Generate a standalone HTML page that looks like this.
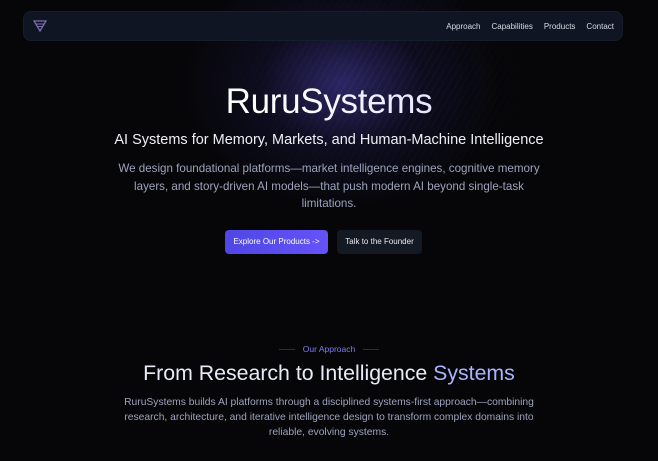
<!DOCTYPE html>
<html><head><meta charset="utf-8"><style>
*{margin:0;padding:0;box-sizing:border-box}
body{width:658px;height:461px;overflow:hidden;background:#060608;font-family:"Liberation Sans",sans-serif;position:relative;color:#fff}
.glow{position:absolute;left:180px;top:0px;width:360px;height:280px;background:radial-gradient(ellipse 45% 45% at 45% 30%,rgba(80,70,190,.5),rgba(40,35,110,.22) 50%,rgba(0,0,0,0) 100%)}
.lines{position:absolute;left:180px;top:0px;width:360px;height:280px;background:repeating-linear-gradient(120deg,rgba(255,255,255,0) 0 5px,rgba(150,150,255,.07) 5px 6px);-webkit-mask:radial-gradient(ellipse 50% 45% at 55% 30%,#000,transparent);mask:radial-gradient(ellipse 50% 45% at 55% 30%,#000,transparent)}
nav{position:absolute;left:23px;top:11px;width:600px;height:30px;background:#0f1522;border-radius:8px;border:1px solid #161d2b}
nav .links{position:absolute;right:8px;top:10px;font-size:8px;color:#d8dbe4}
nav .links span{margin-left:11px}
.c{position:absolute;left:0;width:658px;text-align:center}
h1{font-size:35px;font-weight:500;top:82px;letter-spacing:-.3px;background:linear-gradient(90deg,#fff 40%,#c8c6ff);-webkit-background-clip:text;color:transparent}
.sub{top:132px;font-size:14.5px;color:#eef0f6}
.p{top:160px;font-size:11.6px;line-height:17.5px;color:#9ea3bd;padding:0 110px}
.btn{position:absolute;top:230px;height:24px;border-radius:4px;font-size:8px;line-height:24px;text-align:center}
.b1{left:225px;width:103px;background:linear-gradient(90deg,#4f46e5,#6553f7);color:#fff}
.b2{left:337px;width:85px;background:#141a24;color:#e6e8ee}
.tag{top:344px;font-size:8.5px;color:#7f7cf2}
.tag i{display:inline-block;width:16px;height:1px;background:#2a2d3a;vertical-align:middle;margin:0 8px}
h2{top:361px;font-size:21.3px;font-weight:500;color:#e8ebf7}
h2 span{color:#aab4ff}
.p2{top:395px;font-size:10.3px;line-height:15px;color:#9ea3bd;padding:0 115px}
</style></head><body>
<div class="glow"></div><div class="lines"></div>
<nav><svg style="position:absolute;left:9px;top:8px" width="14" height="12" viewBox="0 0 14 12"><path d="M1 1h12L7 11z" fill="none" stroke="#7c6fb0" stroke-width="1.3"/><path d="M3.5 4h7M5 6.5h4" stroke="#7c6fb0" stroke-width="1"/></svg>
<div class="links"><span>Approach</span><span>Capabilities</span><span>Products</span><span>Contact</span></div></nav>
<h1 class="c">RuruSystems</h1>
<div class="c sub">AI Systems for Memory, Markets, and Human-Machine Intelligence</div>
<div class="c p">We design foundational platforms—market intelligence engines, cognitive memory layers, and story-driven AI models—that push modern AI beyond single-task limitations.</div>
<div class="btn b1">Explore Our Products -&gt;</div>
<div class="btn b2">Talk to the Founder</div>
<div class="c tag"><i></i>Our Approach<i></i></div>
<h2 class="c">From Research to Intelligence <span>Systems</span></h2>
<div class="c p2">RuruSystems builds AI platforms through a disciplined systems-first approach—combining research, architecture, and iterative intelligence design to transform complex domains into reliable, evolving systems.</div>
</body></html>
